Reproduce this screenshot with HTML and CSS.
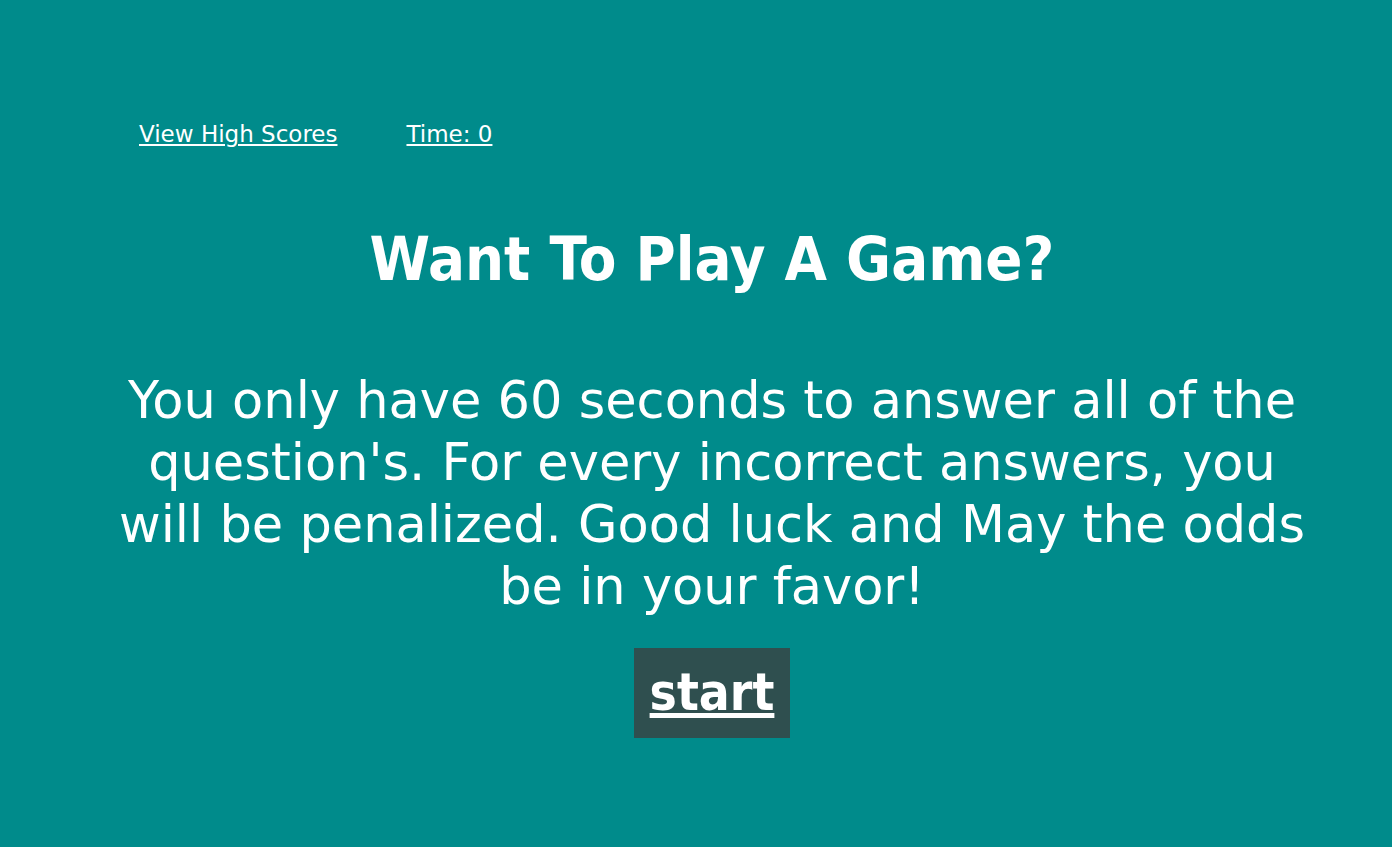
FILE: index.html
```html
<!DOCTYPE html>
<html>
<head>
<meta charset="utf-8">
<link rel="stylesheet" href="styles.css">
</head>
<body>
<header class="nav">
  <a class="nav-link" href="#">View High Scores</a>
  <a class="nav-link" href="#">Time: 0</a>
</header>
<main class="main">
  <h1 class="title">Want To Play A Game?</h1>
  <p class="intro">You only have 60 seconds to answer all of the question's. For every incorrect answers, you will be penalized. Good luck and May the odds be in your favor!</p>
  <a class="start" href="#">start</a>
</main>
</body>
</html>
```
FILE: styles.css
```css
html, body {
  margin: 0;
  padding: 0;
  background: #008b8b;
  color: #fff;
  font-family: "DejaVu Sans", sans-serif;
}
.nav {
  display: flex;
  gap: 69px;
  padding: 119px 0 0 139px;
}
.nav-link {
  color: #fff;
  font-size: 23px;
  line-height: 30px;
}
.main {
  display: flex;
  flex-direction: column;
  align-items: center;
  padding: 0 80px 0 112px;
}
.title {
  margin: 75px 0 0;
  font-family: "DejaVu Sans Condensed", "DejaVu Sans", sans-serif;
  font-size: 61px;
  font-weight: bold;
  line-height: 70px;
}
.intro {
  margin: 76px 0 0;
  text-align: center;
  font-size: 51px;
  line-height: 62px;
}
.start {
  margin-top: 30px;
  background: #2f4f4f;
  color: #fff;
  font-family: "DejaVu Sans Condensed", "DejaVu Sans", sans-serif;
  font-size: 51px;
  font-weight: bold;
  padding: 14px 16px;
  line-height: 62px;
}
```
